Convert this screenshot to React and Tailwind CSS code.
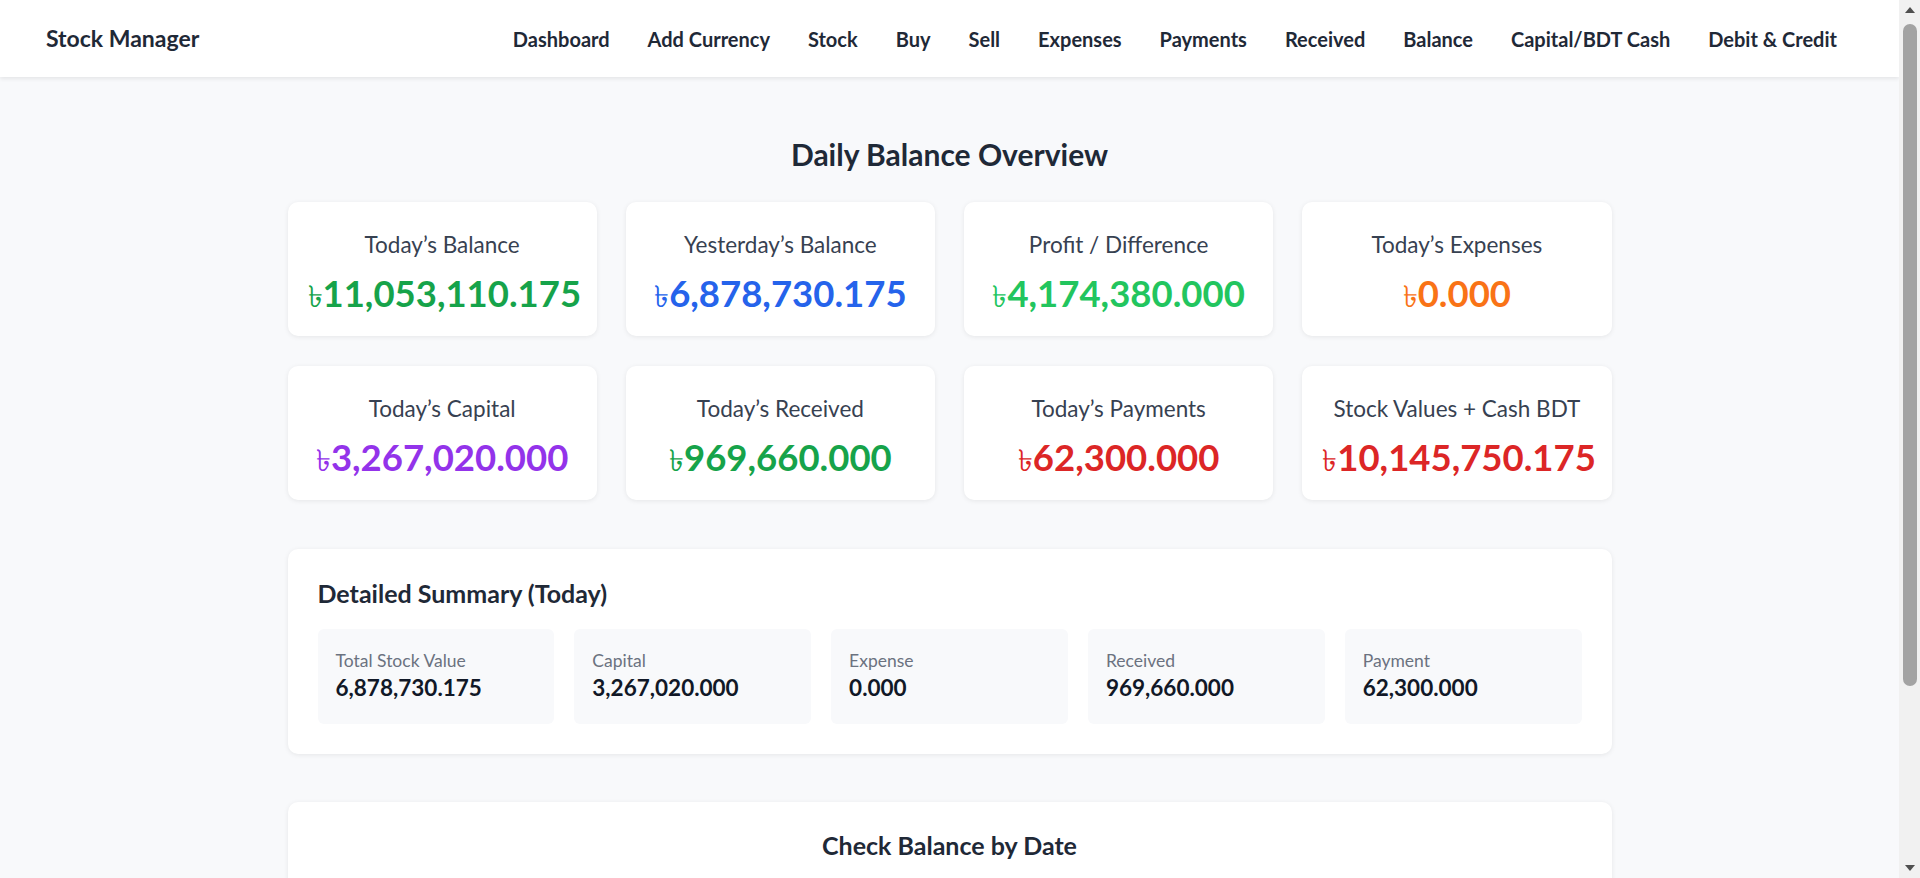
import React from 'react';

const NAV_LINKS = ['Dashboard', 'Add Currency', 'Stock', 'Buy', 'Sell', 'Expenses', 'Payments', 'Received', 'Balance', 'Capital/BDT Cash', 'Debit & Credit'];

const OVERVIEW = [
    { label: 'Today’s Balance', value: '11,053,110.175', color: 'text-[#16a34a]' },
    { label: 'Yesterday’s Balance', value: '6,878,730.175', color: 'text-[#2563eb]' },
    { label: 'Profit / Difference', value: '4,174,380.000', color: 'text-[#22c55e]' },
    { label: 'Today’s Expenses', value: '0.000', color: 'text-[#f97316]' },
    { label: 'Today’s Capital', value: '3,267,020.000', color: 'text-[#9333ea]' },
    { label: 'Today’s Received', value: '969,660.000', color: 'text-[#16a34a]' },
    { label: 'Today’s Payments', value: '62,300.000', color: 'text-[#dc2626]' },
    { label: 'Stock Values + Cash BDT', value: '10,145,750.175', color: 'text-[#dc2626]' },
];

const SUMMARY = [
    { label: 'Total Stock Value', value: '6,878,730.175' },
    { label: 'Capital', value: '3,267,020.000' },
    { label: 'Expense', value: '0.000' },
    { label: 'Received', value: '969,660.000' },
    { label: 'Payment', value: '62,300.000' },
];

const StatCard = ({ label, value, color }) => (
    <div className="bg-white rounded-[10px] shadow-[0_1px_5px_rgba(0,0,0,0.08)] px-5 pt-[25px] pb-[20px] text-center">
        <div className="text-[22.5px] leading-[35px] text-[#374151]">{label}</div>
        <div className={`mt-[9px] h-[45px] text-[36.5px] leading-[45px] font-bold whitespace-nowrap ${color}`}>
            <span className="font-normal text-[30px] leading-none">৳</span>{value}
        </div>
    </div>
);

// stand-in for the browser scrollbar seen in the reference
const ScrollBar = () => (
    <div className="fixed top-0 right-0 h-screen w-[21px] bg-[#f1f1f1] flex flex-col items-center">
        <div className="h-[20px] flex items-center justify-center">
            <div className="w-0 h-0 border-l-[5px] border-r-[5px] border-b-[6px] border-l-transparent border-r-transparent border-b-[#505050]" />
        </div>
        <div className="w-[14px] h-[662px] mt-[4px] rounded-full bg-[#a3a3a3]" />
        <div className="flex-1" />
        <div className="h-[20px] flex items-center justify-center">
            <div className="w-0 h-0 border-l-[5px] border-r-[5px] border-t-[6px] border-l-transparent border-r-transparent border-t-[#505050]" />
        </div>
    </div>
);

const App = () => {
    return (
        <div className="min-h-screen bg-[#f8f9fb] text-[#1f2937] pr-[21px] font-['Lato','Open_Sans',sans-serif]">
            {/* top nav */}
            <nav className="h-[77px] bg-white shadow-[0_2px_4px_rgba(0,0,0,0.08)] flex items-center justify-between pl-[46px] pr-[62px]">
                <div className="text-[23px] font-bold">Stock Manager</div>
                <div className="flex items-center gap-[38px]">
                    {NAV_LINKS.map((l) => (
                        <a key={l} href="#" className="text-[20px] font-bold">{l}</a>
                    ))}
                </div>
            </nav>

            <main className="w-[1324px] mx-auto pt-[57px] pb-16">
                <h1 className="text-[30px] leading-[40px] font-bold text-center mb-[28px]">Daily Balance Overview</h1>

                <div className="grid grid-cols-4 gap-x-[29px] gap-y-[30px]">
                    {OVERVIEW.map((c) => <StatCard key={c.label} {...c} />)}
                </div>

                {/* detailed summary */}
                <div className="mt-[49px] bg-white rounded-[10px] shadow-[0_1px_5px_rgba(0,0,0,0.08)] pt-[27px] px-[30px] pb-[30px]">
                    <h2 className="text-[25px] leading-[35px] font-bold mb-[18px]">Detailed Summary (Today)</h2>
                    <div className="grid grid-cols-5 gap-[20px]">
                        {SUMMARY.map((s) => (
                            <div key={s.label} className="bg-[#f8f9fb] rounded-md px-[18px] pt-[19px] pb-[21px]">
                                <div className="text-[17.5px] leading-[25px] text-[#6b7280]">{s.label}</div>
                                <div className="text-[22.5px] leading-[30px] font-bold text-[#111827]">{s.value}</div>
                            </div>
                        ))}
                    </div>
                </div>

                {/* check by date */}
                <div className="mt-[48px] bg-white rounded-[10px] shadow-[0_1px_5px_rgba(0,0,0,0.08)] pt-[26px] px-[30px] pb-[30px]">
                    <h2 className="text-[25px] leading-[35px] font-bold text-center mb-6">Check Balance by Date</h2>
                    <div className="flex items-center justify-center gap-4">
                        <input type="date" className="border border-gray-300 rounded-md px-4 py-2 text-[18px]" />
                        <button className="bg-[#2563eb] text-white rounded-md px-6 py-2 text-[18px] font-bold">Check</button>
                    </div>
                </div>
            </main>

            <ScrollBar />
        </div>
    );
};

export default App;
